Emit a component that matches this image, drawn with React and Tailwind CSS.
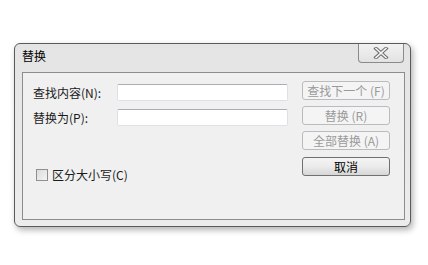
const font = { fontFamily: '"Noto Sans CJK SC", "Liberation Sans", sans-serif' };

const CloseGlyph = () => (
  <svg width="16" height="12" viewBox="0 0 16 12">
    <path
      d="M3 1.5 L13 10.5 M13 1.5 L3 10.5"
      stroke="#6b6b6b"
      strokeWidth="3.6"
      strokeLinecap="square"
      fill="none"
    />
    <path
      d="M3 1.5 L13 10.5 M13 1.5 L3 10.5"
      stroke="#f4f4f4"
      strokeWidth="1.6"
      strokeLinecap="square"
      fill="none"
    />
  </svg>
);

const Field = ({ label }) => (
  <div className="flex h-[17px] items-center">
    <span className="w-[84px] text-[12px] leading-none text-[#1a1a1a]">{label}</span>
    <div className="h-[17px] w-[171px] rounded-[2px] border border-[#dde1e6] border-t-[#abadb3] bg-white" />
  </div>
);

const Btn = ({ children, primary }) => (
  <button
    className={
      primary
        ? 'flex h-[19px] w-[88px] items-center justify-center rounded-[3px] border border-[#707070] bg-gradient-to-b from-[#f4f4f4] via-[#ebebeb] to-[#d6d6d6] text-[12px] leading-none text-black'
        : 'flex h-[19px] w-[88px] items-center justify-center rounded-[3px] border border-[#b9bcbf] bg-[#f4f4f4] text-[12px] leading-none text-[#9a9a9a]'
    }
  >
    {children}
  </button>
);

export default function App() {
  return (
    <div className="h-[265px] w-[428px] overflow-hidden bg-white pl-[14px] pt-[43px]" style={font}>
      <div className="flex h-[184px] w-[397px] flex-col rounded-[6px] border border-[#5a5a5a] bg-gradient-to-b from-[#e4e4e4] to-[#ececec] shadow-[2px_3px_6px_rgba(0,0,0,0.3)]">
        <div className="flex h-[28px] items-start justify-between pl-[7px] pr-[6px]">
          <span className="pt-[6px] text-[12px] leading-none text-black">替换</span>
          <div className="flex h-[19px] w-[46px] items-center justify-center rounded-b-[4px] border border-t-0 border-[#8a8a8a] bg-gradient-to-b from-[#f2f2f2] to-[#e2e2e2]">
            <CloseGlyph />
          </div>
        </div>
        <div className="mb-[6px] ml-[7px] mr-[5px] flex flex-1 border border-[#8c8c8c] bg-[#f0f0f0] pl-[10px] pt-[8px]">
          <div className="flex flex-col">
            <div className="mt-[3px] flex flex-col gap-[8px]">
              <Field label="查找内容(N):" />
              <Field label="替换为(P):" />
            </div>
            <div className="ml-[3px] mt-[43px] flex items-center gap-[4px]">
              <div className="h-[12px] w-[12px] border border-[#8f8f8f] bg-gradient-to-br from-[#dcdcdc] to-[#f4f4f4]" />
              <span className="text-[12px] leading-none text-[#1a1a1a]">区分大小写(C)</span>
            </div>
          </div>
          <div className="ml-[14px] flex flex-col gap-[6px]">
            <Btn>查找下一个 (F)</Btn>
            <Btn>替换 (R)</Btn>
            <Btn>全部替换 (A)</Btn>
            <div className="mt-[1px]">
              <Btn primary>取消</Btn>
            </div>
          </div>
        </div>
      </div>
    </div>
  );
}
